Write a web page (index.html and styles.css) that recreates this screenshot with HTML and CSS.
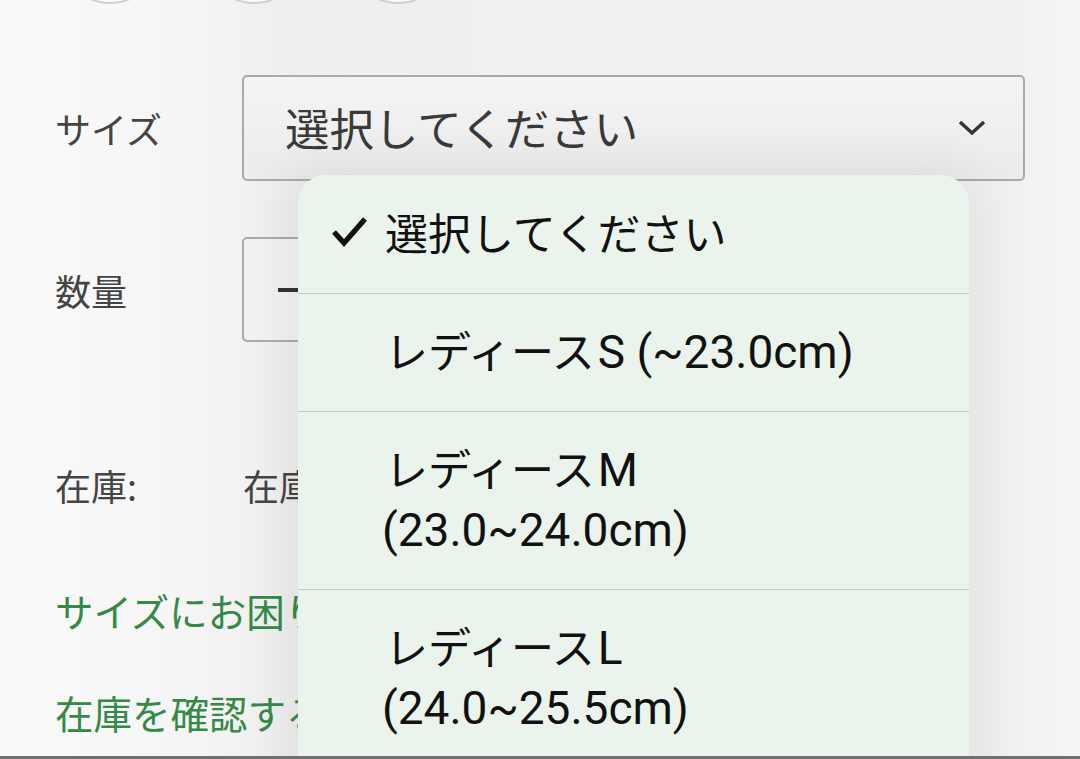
FILE: index.html
```html
<!DOCTYPE html>
<html lang="ja">
<head>
<meta charset="utf-8">
<title>サイズ選択</title>
<link rel="stylesheet" href="styles.css">
</head>
<body>
<div class="page">
  <div class="swatches">
    <span class="swatch"></span>
    <span class="swatch"></span>
    <span class="swatch"></span>
  </div>

  <div class="row row-size">
    <div class="label">サイズ</div>
    <div class="select">
      <span class="select-text">選択してください</span>
      <svg class="chevron" width="30" height="18" viewBox="0 0 30 18"><path d="M3 3 L15 14 L27 3" fill="none" stroke="#333" stroke-width="3.4"/></svg>
    </div>
  </div>

  <div class="row row-qty">
    <div class="label">数量</div>
    <div class="qty">
      <span class="minus"></span>
    </div>
  </div>

  <div class="row row-stock">
    <div class="label">在庫:</div>
    <div class="stock-value">在庫あり</div>
  </div>

  <div class="link link-1">サイズにお困りの方はこちら</div>
  <div class="link link-2">在庫を確認する</div>
</div>

<div class="menu">
  <div class="option selected">
    <svg class="check" width="40" height="34" viewBox="0 0 40 34"><path d="M4 17 L14 28 L35 4" fill="none" stroke="#111" stroke-width="5.2" stroke-linejoin="miter"/></svg>
    <span>選択してください</span>
  </div>
  <div class="option"><span>レディース<span class="latin">S (~23.0cm)</span></span></div>
  <div class="option"><span>レディース<span class="latin">M</span><br><span class="latin">(23.0~24.0cm)</span></span></div>
  <div class="option"><span>レディース<span class="latin">L</span><br><span class="latin">(24.0~25.5cm)</span></span></div>
</div>

<div class="bottom-edge"></div>
</body>
</html>
```

FILE: styles.css
```css
html, body {
  margin: 0;
  padding: 0;
  height: 100%;
  overflow: hidden;
}

body {
  background: linear-gradient(90deg, #fafafa 0%, #f5f5f5 18%, #eeeeee 27%, #f1f1f1 60%, #f0f0f0 92%, #f5f5f5 100%);
  font-family: "Noto Sans CJK JP", "Noto Sans", sans-serif;
  color: #444;
}

.page {
  padding-left: 55px;
}

.swatches {
  display: flex;
  gap: 44px;
  margin-top: -96px;
  padding-left: 5px;
}

.swatch {
  width: 100px;
  height: 100px;
  border-radius: 50%;
  border: 2px solid #d0d0d0;
  box-sizing: border-box;
  background: #fafafa;
}

.row {
  display: grid;
  grid-template-columns: 187px 783px;
  align-items: center;
}

.label {
  font-size: 36px;
  line-height: 50px;
  color: #444;
}

.row-size {
  margin-top: 71px;
}

.select {
  height: 106px;
  box-sizing: border-box;
  border: 2px solid #aaaaaa;
  border-radius: 5px;
  background: linear-gradient(180deg, #f4f4f4, #ebebeb);
  display: flex;
  align-items: center;
  justify-content: space-between;
  padding: 0 36px 0 41px;
}

.select-text {
  font-size: 44.5px;
  color: #3a3a3a;
  line-height: 1;
  margin-top: -2px;
}

.chevron {
  display: block;
}

.row-qty {
  margin-top: 56px;
}

.qty {
  width: 420px;
  height: 105px;
  box-sizing: border-box;
  border: 2px solid #aaaaaa;
  border-radius: 5px;
  background: #f2f2f2;
  display: flex;
  align-items: center;
  padding-left: 34px;
}

.minus {
  width: 24px;
  height: 4px;
  background: #333;
}

.row-stock {
  margin-top: 118px;
}

.stock-value {
  font-size: 36px;
  line-height: 50px;
  color: #444;
  padding-left: 1px;
}

.link {
  font-size: 38.5px;
  line-height: 50px;
  color: #338a45;
}

.link-1 {
  margin-top: 75px;
}

.link-2 {
  margin-top: 52px;
}

.menu {
  position: absolute;
  left: 298px;
  top: 175px;
  width: 671px;
  height: 640px;
  background: #ebf4ec;
  border-radius: 28px 28px 0 0;
  box-shadow: 0 0 50px 12px rgba(0, 0, 0, 0.06);
  font-family: "Noto Sans CJK JP", sans-serif;
  color: #111;
}

.option {
  display: flex;
  align-items: center;
  padding: 25px 0 32px 87px;
  font-size: 43px;
  line-height: 60px;
  border-top: 1.5px solid #c4ccc6;
  position: relative;
}

.option > span {
  display: block;
}

.option:first-child {
  border-top: none;
  padding-top: 26px;
}

.latin {
  font-family: Roboto, "Liberation Sans", sans-serif;
  font-size: 46px;
  line-height: 0;
  padding-left: 3px;
}

.option br + .latin {
  padding-left: 0;
  margin-left: -3px;
}

.check {
  position: absolute;
  left: 32px;
  top: 40px;
}

.bottom-edge {
  position: fixed;
  left: 0;
  right: 0;
  bottom: 0;
  height: 3px;
  background: #707070;
}
```
